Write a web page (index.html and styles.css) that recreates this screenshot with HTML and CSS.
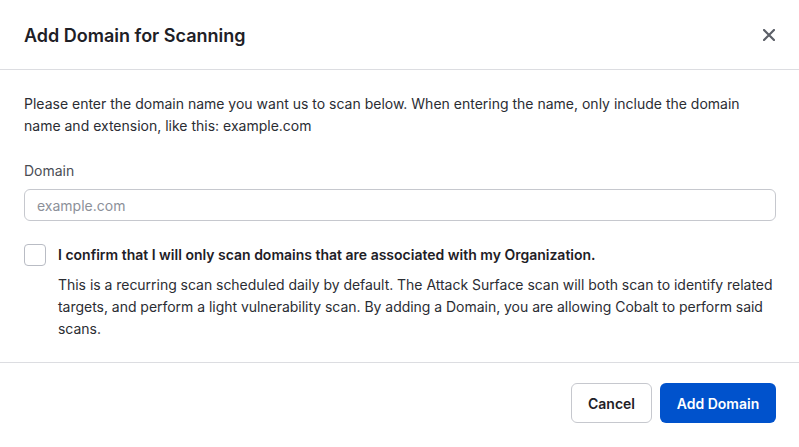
FILE: index.html
```html
<!DOCTYPE html>
<html lang="en">
<head>
    <meta charset="UTF-8">
    <meta name="viewport" content="width=device-width, initial-scale=1.0">
    <title>Add Domain for Scanning</title>
    <link rel="stylesheet" href="styles.css">
</head>
<body>

<div class="modal">
    <!-- Cabecera -->
    <div class="modal-header">
        <h2>Add Domain for Scanning</h2>
        <button class="close" aria-label="Close">
            <svg width="12" height="12" viewBox="0 0 12 12">
                <path d="M1 1 L11 11 M11 1 L1 11" stroke="#5c6068" stroke-width="2.2" stroke-linecap="round"/>
            </svg>
        </button>
    </div>

    <!-- Contenido -->
    <div class="modal-body">
        <p class="intro">Please enter the domain name you want us to scan below. When entering the name, only include the domain name and extension, like this: example.com</p>

        <label class="label" for="domain">Domain</label>
        <input type="text" id="domain" class="input" placeholder="example.com">

        <div class="confirm">
            <span class="checkbox"></span>
            <div class="confirm-text">
                <div class="confirm-title">I confirm that I will only scan domains that are associated with my Organization.</div>
                <p class="confirm-desc">This is a recurring scan scheduled daily by default. The Attack Surface scan will both scan to identify related targets, and perform a light vulnerability scan. By adding a Domain, you are allowing Cobalt to perform said scans.</p>
            </div>
        </div>
    </div>

    <!-- Pie -->
    <div class="modal-footer">
        <button class="btn btn-secondary">Cancel</button>
        <button class="btn btn-primary">Add Domain</button>
    </div>
</div>

</body>
</html>
```

FILE: styles.css
```css
body {
    margin: 0;
    background-color: #fff;
    font-family: Inter, "Noto Sans", sans-serif;
    color: #2b2d33;
}
.modal {
    width: 799px;
    background-color: #fff;
}
.modal-header {
    height: 69px;
    display: flex;
    align-items: center;
    justify-content: space-between;
    padding: 0 24px;
    border-bottom: 1px solid #dcdde1;
}
.modal-header h2 {
    margin: 1px 0 0;
    font-size: 18px;
    font-weight: 600;
    color: #1e2026;
}
.close {
    background: none;
    border: none;
    padding: 0;
    margin-right: -2px;
    width: 16px;
    height: 16px;
    display: flex;
    align-items: center;
    justify-content: center;
    cursor: pointer;
}
.modal-body {
    padding: 23px 23px 22px 24px;
}
.intro {
    margin: 0 0 24px;
    font-size: 14px;
    line-height: 22px;
}
.label {
    display: block;
    font-size: 14px;
    line-height: 20px;
    color: #4a4d55;
    margin-bottom: 8px;
}
.input {
    box-sizing: border-box;
    width: 100%;
    height: 32px;
    padding: 0 12px;
    border: 1px solid #c6c8ce;
    border-radius: 6px;
    font-family: inherit;
    font-size: 14px;
    color: #2b2d33;
    outline: none;
}
.input::placeholder {
    color: #8c9099;
}
.confirm {
    display: flex;
    gap: 12px;
    margin-top: 23px;
}
.checkbox {
    box-sizing: border-box;
    flex: none;
    width: 22px;
    height: 22px;
    border: 1px solid #b9bcc4;
    border-radius: 4px;
}
.confirm-text {
    flex: 1;
}
.confirm-title {
    font-size: 14px;
    font-weight: 600;
    line-height: 20px;
    color: #1e2026;
    margin-top: 1px;
}
.confirm-desc {
    margin: 9px 0 0;
    font-size: 14px;
    line-height: 22px;
    letter-spacing: -0.03px;
    color: #2b2d33;
}
.modal-footer {
    border-top: 1px solid #dcdde1;
    display: flex;
    justify-content: flex-end;
    gap: 8px;
    padding: 20px 23px;
}
.btn {
    height: 40px;
    padding: 0 16px;
    border-radius: 6px;
    font-family: inherit;
    font-size: 14px;
    font-weight: 600;
    cursor: pointer;
}
.btn-secondary {
    background-color: #fff;
    border: 1px solid #c6c8ce;
    color: #1e2026;
    width: 81px;
}
.btn-primary {
    background-color: #0052cc;
    border: none;
    color: #fff;
    width: 116px;
}
```
